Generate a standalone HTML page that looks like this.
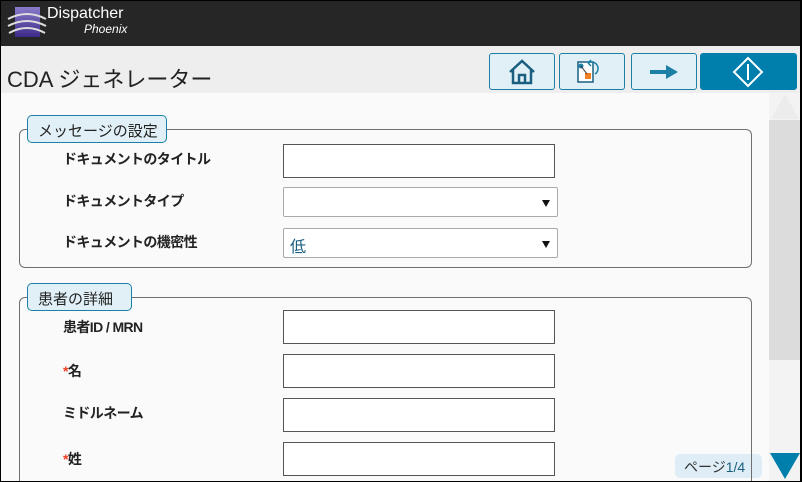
<!DOCTYPE html>
<html><head><meta charset="utf-8"><style>
*{box-sizing:border-box;margin:0;padding:0}
body{width:802px;height:482px;overflow:hidden;background:#000;position:relative;font-family:"Liberation Sans","Noto Sans CJK JP",sans-serif}
#f{position:absolute;left:1px;top:1px;width:799px;height:480px;background:#fafafa;overflow:hidden}
.a{position:absolute}
.hdr{left:0;top:0;width:799px;height:45px;background:#262626}
.tb{left:0;top:45px;width:799px;height:47px;background:#eeeeee}
.btn{top:52px;height:37px;border:1px solid #1b7fa6;border-radius:3px;background:#e1f0f7}
.fs{border:1px solid #6f6f6f;border-radius:6px}
.lg{height:28px;border:1px solid #1b7fa6;border-radius:5px;background:#e1f0f7;font-size:15px;color:#222;padding:4px 0 0 10px}
.lb{left:62px;font-size:14px;letter-spacing:-0.6px;font-weight:bold;color:#222}
.in{left:282px;width:272px;height:34px;border:1px solid #555;background:#fff}
.sel{left:282px;width:275px;height:30px;border:1px solid #aaa;border-radius:2px;background:#fff}
.sel:after{content:"";position:absolute;right:7px;top:12px;border-left:4px solid transparent;border-right:4px solid transparent;border-top:7px solid #111}
.st{color:#f04020}
</style></head><body><div id="f">
<div class="a hdr"></div>
<svg class="a" style="left:5px;top:4px" width="42" height="34" viewBox="0 0 42 34">
<defs><linearGradient id="g" x1="0" y1="0" x2="0" y2="1"><stop offset="0" stop-color="#8a7ac8"/><stop offset="1" stop-color="#3e2a8a"/></linearGradient></defs>
<rect x="9" y="2" width="25" height="30" fill="url(#g)"/>
<path d="M2 14 Q21 4 40 14 M2 21 Q21 11 40 21 M3 28 Q21 18 39 28" stroke="#ddd" stroke-width="2" fill="none"/>
</svg>
<div class="a" style="left:46px;top:4px;color:#fff;font-size:16px">Dispatcher</div>
<div class="a" style="left:83px;top:21px;color:#fff;font-size:12px;font-style:italic">Phoenix</div>
<div class="a tb"></div>
<div class="a" style="left:6px;top:61px;font-size:22px;color:#222">CDA ジェネレーター</div>
<div class="a btn" style="left:488px;width:66px"><svg width="64" height="35"><path d="M20 18 L32 7 L44 18 M23 15 V29 H41 V15 M29 29 V21 H35 V29" stroke="#1a5f80" stroke-width="2.5" fill="none"/></svg></div>
<div class="a btn" style="left:558px;width:66px"><svg width="64" height="35"><rect x="18" y="8" width="15" height="20" fill="#fff" stroke="#1a5f80" stroke-width="1.5"/><rect x="25" y="19" width="6" height="6" fill="#f08020"/><circle cx="21" cy="12" r="2.5" fill="#1b7fa6"/><path d="M21 12 L27 20" stroke="#333" stroke-width="1"/><path d="M28 9 A6 6 0 1 1 35 20 M28 9 L31 6 M28 9 L31 12" stroke="#1b7fa6" stroke-width="1.5" fill="none"/></svg></div>
<div class="a btn" style="left:630px;width:66px"><svg width="64" height="35"><path d="M18 16 H34 V11 L46 18 L34 25 V20 H18 Z" fill="#1b7fa6"/></svg></div>
<div class="a btn" style="left:699px;width:97px;background:#007fad;border-color:#007fad"><svg width="95" height="35"><path d="M47 4 L61 18 L47 32 L33 18 Z" stroke="#fff" stroke-width="2" fill="none"/><path d="M47 10 V26" stroke="#fff" stroke-width="2"/></svg></div>
<div class="a" style="left:768px;top:92px;width:31px;height:390px;background:#f3f3f3"></div>
<div class="a" style="left:770px;top:93px;border-left:14px solid transparent;border-right:14px solid transparent;border-bottom:25px solid #ececec"></div>
<div class="a" style="left:768px;top:119px;width:31px;height:240px;background:#dcdcdc"></div>
<div class="a" style="left:769px;top:452px;border-left:15px solid transparent;border-right:15px solid transparent;border-top:26px solid #007fad"></div>
<div class="a" style="left:674px;top:453px;width:87px;height:24px;background:#dfeef6;border-radius:5px;font-size:14px;color:#333;padding:3px 0 0 9px">ページ<span style="color:#1a5f80">1/4</span></div>
<div class="a fs" style="left:18px;top:128px;width:733px;height:139px"></div>
<div class="a lg" style="left:26px;top:114px;width:140px">メッセージの設定</div>
<div class="a lb" style="top:148px">ドキュメントのタイトル</div>
<div class="a in" style="top:143px"></div>
<div class="a lb" style="top:190px">ドキュメントタイプ</div>
<div class="a sel" style="top:186px"></div>
<div class="a lb" style="top:231px">ドキュメントの機密性</div>
<div class="a sel" style="top:227px"><span style="position:absolute;left:6px;top:4px;font-size:16px;color:#1a5f80">低</span></div>
<div class="a fs" style="left:18px;top:296px;width:733px;height:200px"></div>
<div class="a lg" style="left:26px;top:282px;width:105px">患者の詳細</div>
<div class="a lb" style="top:316px">患者ID / MRN</div>
<div class="a in" style="top:309px"></div>
<div class="a lb" style="top:360px"><span class="st">*</span>名</div>
<div class="a in" style="top:353px"></div>
<div class="a lb" style="top:402px">ミドルネーム</div>
<div class="a in" style="top:397px"></div>
<div class="a lb" style="top:448px"><span class="st">*</span>姓</div>
<div class="a in" style="top:441px"></div>
</div></body></html>
